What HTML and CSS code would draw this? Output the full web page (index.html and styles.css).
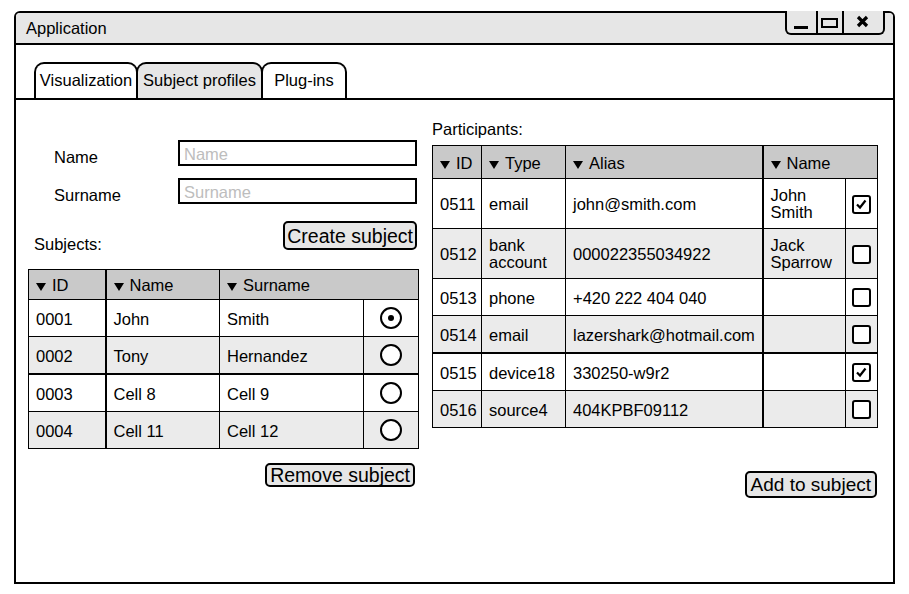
FILE: index.html
```html
<!DOCTYPE html>
<html lang="en">
<head>
  <meta charset="UTF-8">
  <meta name="viewport" content="width=device-width, initial-scale=1.0">
  <title>Application</title>
  <link rel="stylesheet" href="styles.css">
</head>
<body>

  <div class="window">
    <div class="titlebar">
      <span class="title">Application</span>
      <div class="controls">
        <span class="ctl ctl-min">
          <svg width="29" height="22" viewBox="0 0 29 22"><rect x="7" y="15" width="14" height="3" fill="#000"/></svg>
        </span>
        <span class="ctl ctl-max">
          <svg width="24" height="22" viewBox="0 0 24 22"><rect x="4" y="8" width="15" height="8" fill="none" stroke="#000" stroke-width="2"/></svg>
        </span>
        <span class="ctl ctl-close">
          <svg width="39" height="22" viewBox="0 0 39 22"><path d="M14 6 L23 15 M23 6 L14 15" stroke="#000" stroke-width="3.2"/></svg>
        </span>
      </div>
    </div>

    <div class="tabs">
      <div class="tab tab-vis">Visualization</div>
      <div class="tab tab-subj active">Subject profiles</div>
      <div class="tab tab-plug">Plug-ins</div>
    </div>

    <div class="panel">
      <div class="left">
        <div class="form">
          <label for="name">Name</label>
          <input type="text" id="name" placeholder="Name">
          <label for="surname">Surname</label>
          <input type="text" id="surname" placeholder="Surname">
        </div>

        <div class="subjects-head">
          <span class="caption">Subjects:</span>
          <button class="btn btn-create">Create subject</button>
        </div>

        <table class="grid subjects">
          <colgroup>
            <col style="width:77px">
            <col style="width:114px">
            <col style="width:144px">
            <col style="width:55px">
          </colgroup>
          <tr class="head">
            <th><span class="sort"></span>ID</th>
            <th class="thick-left"><span class="sort"></span>Name</th>
            <th colspan="2"><span class="sort"></span>Surname</th>
          </tr>
          <tr>
            <td>0001</td>
            <td class="thick-left">John</td>
            <td>Smith</td>
            <td class="pick"><span class="radio on"></span></td>
          </tr>
          <tr class="alt">
            <td>0002</td>
            <td class="thick-left">Tony</td>
            <td>Hernandez</td>
            <td class="pick"><span class="radio"></span></td>
          </tr>
          <tr class="thick-top">
            <td>0003</td>
            <td class="thick-left">Cell 8</td>
            <td>Cell 9</td>
            <td class="pick"><span class="radio"></span></td>
          </tr>
          <tr class="alt">
            <td>0004</td>
            <td class="thick-left">Cell 11</td>
            <td>Cell 12</td>
            <td class="pick"><span class="radio"></span></td>
          </tr>
        </table>

        <div class="actions actions-left">
          <button class="btn btn-remove">Remove subject</button>
        </div>
      </div>

      <div class="right">
        <div class="caption">Participants:</div>

        <table class="grid participants">
          <colgroup>
            <col style="width:49px">
            <col style="width:84px">
            <col style="width:197px">
            <col style="width:83px">
            <col style="width:32px">
          </colgroup>
          <tr class="head">
            <th><span class="sort"></span>ID</th>
            <th><span class="sort"></span>Type</th>
            <th><span class="sort"></span>Alias</th>
            <th colspan="2" class="thick-left"><span class="sort"></span>Name</th>
          </tr>
          <tr class="tall">
            <td>0511</td>
            <td>email</td>
            <td>john@smith.com</td>
            <td class="thick-left multi">John<br>Smith</td>
            <td class="pick"><span class="check on"><svg width="15" height="15" viewBox="0 0 15 15"><path d="M3 7.5 L6 10.5 L11.5 3.5" fill="none" stroke="#000" stroke-width="2.2"/></svg></span></td>
          </tr>
          <tr class="tall alt">
            <td>0512</td>
            <td class="multi">bank<br>account</td>
            <td>000022355034922</td>
            <td class="thick-left multi">Jack<br>Sparrow</td>
            <td class="pick"><span class="check"></span></td>
          </tr>
          <tr>
            <td>0513</td>
            <td>phone</td>
            <td>+420 222 404 040</td>
            <td class="thick-left"></td>
            <td class="pick"><span class="check"></span></td>
          </tr>
          <tr class="alt">
            <td>0514</td>
            <td>email</td>
            <td>lazershark@hotmail.com</td>
            <td class="thick-left"></td>
            <td class="pick"><span class="check"></span></td>
          </tr>
          <tr class="thick-top">
            <td>0515</td>
            <td>device18</td>
            <td>330250-w9r2</td>
            <td class="thick-left"></td>
            <td class="pick"><span class="check on"><svg width="15" height="15" viewBox="0 0 15 15"><path d="M3 7.5 L6 10.5 L11.5 3.5" fill="none" stroke="#000" stroke-width="2.2"/></svg></span></td>
          </tr>
          <tr class="alt">
            <td>0516</td>
            <td>source4</td>
            <td>404KPBF09112</td>
            <td class="thick-left"></td>
            <td class="pick"><span class="check"></span></td>
          </tr>
        </table>

        <div class="actions actions-right">
          <button class="btn btn-add">Add to subject</button>
        </div>
      </div>
    </div>
  </div>

</body>
</html>
```

FILE: styles.css
```css
body {
  margin: 0;
  font-family: "Liberation Sans", Arial, sans-serif;
  font-size: 16.5px;
  color: #000;
  background: #fff;
}

.window {
  width: 881px;
  height: 573px;
  margin: 11px 0 0 14px;
  border: 2px solid #000;
  border-radius: 6px 6px 0 0;
  box-sizing: border-box;
  display: flex;
  flex-direction: column;
}

.titlebar {
  position: relative;
  height: 32px;
  box-sizing: border-box;
  background: #e6e6e6;
  border-bottom: 2px solid #000;
  border-radius: 4px 4px 0 0;
  padding-left: 10px;
  display: flex;
  align-items: center;
  line-height: 18px;
}

.controls {
  position: absolute;
  top: -2px;
  right: 8px;
  height: 24px;
  display: flex;
  border: 2px solid #000;
  border-top: none;
  border-radius: 0 0 6px 6px;
  box-sizing: border-box;
  background: #e6e6e6;
}

.ctl {
  display: block;
  height: 22px;
}

.ctl svg {
  display: block;
}

.ctl-max,
.ctl-close {
  border-left: 2px solid #000;
}

.tabs {
  display: flex;
  padding: 17px 0 0 18px;
}

.tab {
  height: 36px;
  box-sizing: border-box;
  border: 2px solid #000;
  border-bottom: none;
  border-radius: 10px 10px 0 0;
  background: #fff;
  display: flex;
  align-items: center;
  justify-content: center;
  padding-bottom: 2px;
}

.tab + .tab {
  margin-left: -2px;
}

.tab-vis {
  width: 104px;
}

.tab-subj {
  width: 127px;
}

.tab-plug {
  width: 86px;
}

.tab.active {
  background: #e6e6e6;
}

.panel {
  flex: 1;
  border-top: 2px solid #000;
  display: flex;
  gap: 14px;
  padding: 20px 0 0 12px;
}

.left {
  width: 390px;
}

.right {
  width: 445px;
}

.form {
  display: grid;
  grid-template-columns: 124px 239px;
  grid-auto-rows: 26px;
  row-gap: 12px;
  margin-top: 20px;
  padding-left: 26px;
}

.form label {
  display: block;
  line-height: 18px;
  padding-top: 8px;
}

.form input {
  width: 239px;
  height: 26px;
  box-sizing: border-box;
  border: 2px solid #000;
  border-radius: 0;
  padding: 2px 4px 0;
  font-family: "Liberation Sans", Arial, sans-serif;
  font-size: 16.5px;
  outline: none;
}

.form input::placeholder {
  color: #bdbdbd;
}

.subjects-head {
  display: flex;
  justify-content: space-between;
  align-items: flex-end;
  margin-top: 17px;
  padding: 0 1px 0 6px;
}

.caption {
  line-height: 18px;
}

.subjects-head .caption {
  margin-bottom: -3px;
}

.btn {
  font-family: "Liberation Sans", Arial, sans-serif;
  font-size: 19.5px;
  color: #000;
  background: #e6e6e6;
  border: 2px solid #000;
  border-radius: 5px;
  padding: 0 2px;
  box-sizing: border-box;
  line-height: 20px;
  white-space: nowrap;
  cursor: pointer;
}

.btn-create {
  height: 29px;
}

.btn-remove {
  height: 24px;
  padding: 0 3px;
}

.btn-add {
  height: 27px;
  font-size: 19px;
  padding: 0 4px;
}

.actions {
  display: flex;
  justify-content: flex-end;
}

.actions-left {
  margin-top: 14px;
  padding-right: 3px;
}

.actions-right {
  margin-top: 43px;
}

.grid {
  border-collapse: collapse;
  table-layout: fixed;
  border: 1px solid #000;
}

.grid th,
.grid td {
  border: 1px solid #000;
  padding: 1px 7px 0;
  text-align: left;
  font-weight: normal;
  white-space: nowrap;
  vertical-align: middle;
  line-height: 18px;
}

.grid th {
  background: #c9c9c9;
}

.grid tr.alt td {
  background: #ebebeb;
}

.grid .thick-left {
  border-left-width: 2px;
}

.grid tr.thick-top td {
  border-top-width: 2px;
}

.grid td.pick {
  padding: 0;
  text-align: center;
}

.grid td.multi {
  line-height: 17px;
}

.sort {
  display: inline-block;
  width: 0;
  height: 0;
  border-left: 5px solid transparent;
  border-right: 5px solid transparent;
  border-top: 8px solid #000;
  margin-right: 6px;
}

.subjects {
  width: 390px;
  margin-top: 19px;
}

.subjects th {
  height: 28px;
}

.subjects td {
  height: 35px;
}

.participants {
  width: 445px;
  margin-top: 7px;
}

.participants th {
  height: 31px;
}

.participants td {
  height: 35px;
}

.participants tr.tall td {
  height: 48px;
}

.radio {
  display: inline-block;
  width: 22px;
  height: 22px;
  box-sizing: border-box;
  border: 2px solid #000;
  border-radius: 50%;
  vertical-align: middle;
  position: relative;
  background: #fff;
}

.radio.on::after {
  content: "";
  position: absolute;
  left: 6px;
  top: 6px;
  width: 6px;
  height: 6px;
  border-radius: 50%;
  background: #000;
}

.check {
  display: inline-flex;
  align-items: center;
  justify-content: center;
  width: 19px;
  height: 19px;
  box-sizing: border-box;
  border: 2px solid #000;
  border-radius: 3px;
  vertical-align: middle;
  background: #fff;
}
```
